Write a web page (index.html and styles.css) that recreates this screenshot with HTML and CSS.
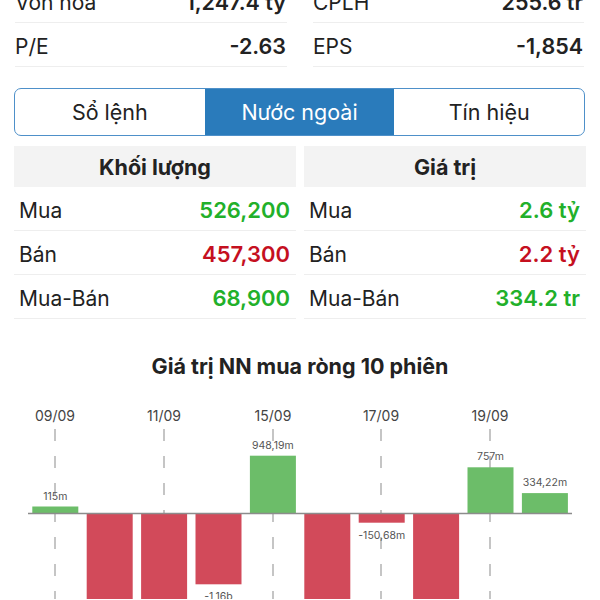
FILE: index.html
```html
<!DOCTYPE html>
<html lang="vi">
<head>
  <meta charset="UTF-8" />
  <meta name="viewport" content="width=device-width, initial-scale=1.0"/>
  <title>Nước ngoài</title>
  <link rel="stylesheet" href="styles.css">
</head>
<body>
  <div class="stats">
    <div class="stat"><span>Vốn hóa</span><span class="stat-value">1,247.4 tỷ</span></div>
    <div class="stat"><span>CPLH</span><span class="stat-value">255.6 tr</span></div>
    <div class="stat"><span>P/E</span><span class="stat-value">-2.63</span></div>
    <div class="stat"><span>EPS</span><span class="stat-value">-1,854</span></div>
  </div>

  <div class="tabs">
    <div class="tab">Sổ lệnh</div>
    <div class="tab active">Nước ngoài</div>
    <div class="tab">Tín hiệu</div>
  </div>

  <div class="tables">
    <div class="table">
      <div class="table-head">Khối lượng</div>
      <div class="row"><span>Mua</span><span class="num up">526,200</span></div>
      <div class="row"><span>Bán</span><span class="num down">457,300</span></div>
      <div class="row"><span>Mua-Bán</span><span class="num up">68,900</span></div>
    </div>
    <div class="table">
      <div class="table-head">Giá trị</div>
      <div class="row"><span>Mua</span><span class="num up">2.6 tỷ</span></div>
      <div class="row"><span>Bán</span><span class="num down">2.2 tỷ</span></div>
      <div class="row"><span>Mua-Bán</span><span class="num up">334.2 tr</span></div>
    </div>
  </div>

  <div class="chart">
    <h3 class="chart-title">Giá trị NN mua ròng 10 phiên</h3>
    <svg class="chart-svg" width="600" height="205" viewBox="0 0 600 205">
      <!-- date guides -->
      <g class="guides">
        <line x1="55" y1="35" x2="55" y2="205"/>
        <line x1="164" y1="35" x2="164" y2="205"/>
        <line x1="273" y1="35" x2="273" y2="205"/>
        <line x1="381" y1="35" x2="381" y2="205"/>
        <line x1="490" y1="35" x2="490" y2="205"/>
      </g>
      <g class="dates">
        <text x="55" y="27">09/09</text>
        <text x="164" y="27">11/09</text>
        <text x="273" y="27">15/09</text>
        <text x="381" y="27">17/09</text>
        <text x="490" y="27">19/09</text>
      </g>

      <!-- bars: 0.061px per million -->
      <rect class="bar-up" x="32.3" y="112.5" width="46" height="7"/>
      <rect class="bar-down" x="86.7" y="119.5" width="46" height="92"/>
      <rect class="bar-down" x="141.1" y="119.5" width="46" height="104"/>
      <rect class="bar-down" x="195.5" y="119.5" width="46" height="70.8"/>
      <rect class="bar-up" x="249.9" y="61.7" width="46" height="57.8"/>
      <rect class="bar-down" x="304.3" y="119.5" width="46" height="98"/>
      <rect class="bar-down" x="358.7" y="119.5" width="46" height="9.2"/>
      <rect class="bar-down" x="413.1" y="119.5" width="46" height="88.5"/>
      <rect class="bar-up" x="467.5" y="73.3" width="46" height="46.2"/>
      <rect class="bar-up" x="521.9" y="99.1" width="46" height="20.4"/>

      <g class="values">
        <text x="55.3" y="105.5">115m</text>
        <text x="109.7" y="227.5">-1,51b</text>
        <text x="164.1" y="239.5">-1,7b</text>
        <text x="218.5" y="206.3">-1,16b</text>
        <text x="272.9" y="54.7">948,19m</text>
        <text x="327.3" y="233.5">-1,6b</text>
        <text x="381.7" y="144.7">-150,68m</text>
        <text x="436.1" y="224">-1,45b</text>
        <text x="490.5" y="66.3">757m</text>
        <text x="544.9" y="92.1">334,22m</text>
      </g>

      <line class="axis" x1="28" y1="119.5" x2="572" y2="119.5"/>
    </svg>
  </div>
</body>
</html>
```

FILE: styles.css
```css
body {
  margin: 0;
  font-family: Inter, "Noto Sans", sans-serif;
  color: #222;
  background: #fff;
}

.stats {
  display: grid;
  grid-template-columns: 272px 271px;
  column-gap: 26px;
  margin: -21px 16px 0 15px;
}

.stat {
  height: 44px;
  box-sizing: border-box;
  display: flex;
  justify-content: space-between;
  align-items: center;
  padding: 3px 1px 0 0;
  border-bottom: 1px solid #eeeeee;
  font-size: 21px;
}

.stat-value {
  font-weight: 600;
  font-size: 21.5px;
}

.tabs {
  display: grid;
  grid-template-columns: repeat(3, 1fr);
  margin: 21px 15px 0 14px;
  height: 48px;
  box-sizing: border-box;
  border: 1.5px solid #4e90c9;
  border-radius: 7px;
  overflow: hidden;
}

.tab {
  display: flex;
  align-items: center;
  justify-content: center;
  font-size: 21.5px;
  color: #222;
}

.tab.active {
  background: #2a7bbb;
  color: #fff;
}

.tables {
  display: grid;
  grid-template-columns: 1fr 1fr;
  gap: 8px;
  margin: 10px 14px 0;
}

.table-head {
  height: 41px;
  display: flex;
  align-items: center;
  justify-content: center;
  background: #f3f3f3;
  font-size: 21.5px;
  font-weight: 700;
}

.row {
  height: 44px;
  box-sizing: border-box;
  display: flex;
  justify-content: space-between;
  align-items: center;
  padding: 3px 6px 0 5px;
  border-bottom: 1px solid #eeeeee;
  font-size: 21px;
}

.num {
  font-weight: 600;
  font-size: 22px;
}

.up {
  color: #22b02a;
}

.down {
  color: #c5101f;
}

.chart-title {
  margin: 34px 0 0;
  line-height: 26px;
  text-align: center;
  font-size: 21.5px;
  font-weight: 700;
  color: #222;
}

.chart-svg {
  display: block;
  margin-top: 15px;
}

.guides line {
  stroke: #b3b3b3;
  stroke-width: 1.5;
  stroke-dasharray: 12 15;
}

.dates text {
  font-family: Inter, sans-serif;
  font-size: 14px;
  fill: #444;
  text-anchor: middle;
}

.values text {
  font-family: Inter, sans-serif;
  font-size: 10.5px;
  fill: #555;
  text-anchor: middle;
}

.bar-up {
  fill: #6cbd69;
}

.bar-down {
  fill: #d24a5a;
}

.axis {
  stroke: #8c8c8c;
  stroke-width: 1.5;
}
```
